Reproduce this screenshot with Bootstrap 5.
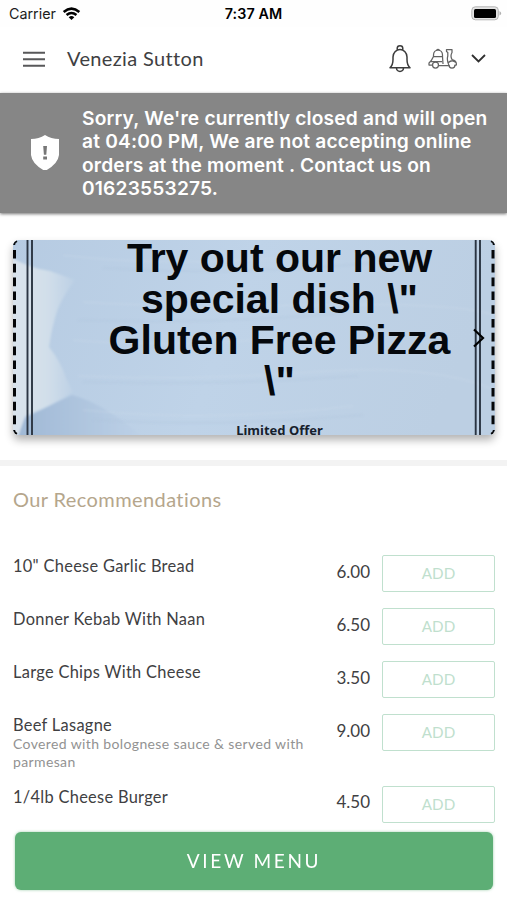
<!DOCTYPE html>
<html lang="en">
<head>
<meta charset="utf-8">
<meta name="viewport" content="width=device-width, initial-scale=1">
<title>Venezia Sutton</title>
<link href="https://cdn.jsdelivr.net/npm/bootstrap@5.3.0/dist/css/bootstrap.min.css" rel="stylesheet">
<style>
html,body{height:900px;overflow:hidden}
body{font-family:Lato,"Liberation Sans",sans-serif;color:#404042;background:#fff}
svg{display:block}
.statusbar{height:27px;font:400 14.3px/26px Inter,sans-serif;color:#1c1c1c;background:#fefefe}
.statusbar>div{width:33.333%}
.carrier{letter-spacing:0;padding-left:1px}
.wifi{margin-left:6px}
.clock{font-weight:600;letter-spacing:.1px;color:#000}
.topbar{height:66px;padding:0 21px 3px 23px}
.brand{font-size:20px;letter-spacing:.35px;margin-left:22px;line-height:26px;margin-top:-2px}
.scooter{margin:0 13px 0 17px}
.notice{height:120px;background:#868686;color:#fff;padding:1px 0 0 31px;box-shadow:0 1px 3px rgba(0,0,0,.55);font:600 19.2px/23.4px Inter,sans-serif;letter-spacing:.17px}
.notice p{margin-left:23px;white-space:nowrap}
.promo{height:195px;margin:27px 12px 0 13px;border-radius:6px;box-shadow:0 5px 9px rgba(0,0,0,.3);background:#bdd0e5}
.promo-copy{padding-left:51px}
.promo h2{font:700 41px/41.2px "Liberation Sans",sans-serif;color:#05080c;margin-top:-2.5px}
.promo small{font:700 13px/16px "Noto Sans",sans-serif;color:#17202b;margin-top:20px}
.next{right:10px;top:88px}
.divider{height:6px;background:#f3f3f3;margin-top:25px}
.heading{font-size:20px;line-height:26px;color:#b5a68c;letter-spacing:.4px;margin:20px 13px 0;font-weight:400}
.menu-list{padding:43px 12px 0 13px}
.item{height:53px}
.item.tall{height:71.5px}
.dish{font-size:16.4px;line-height:20px;letter-spacing:.3px;padding-top:1px}
.desc{font-size:14px;line-height:17.6px;color:#929292;letter-spacing:.37px;width:305px}
.price{font-size:17px;line-height:20px;margin:6.5px 12px 0 0}
.btn-add{width:113px;height:37px;border:1.5px solid #c0e0ce;border-radius:2px;color:#c0dfce;font-size:15.2px;line-height:20px;padding:0 0 1px;background:#fff}
.view{height:58px;left:15px;right:14px;bottom:10px;border-radius:6px;background:#5dae75;color:#fff;font-size:19px;letter-spacing:2.65px;padding:0;box-shadow:0 0 3px rgba(93,174,117,.6)}
</style>
</head>
<body>
<header>
<div class="statusbar d-flex align-items-center justify-content-between">
<div class="d-flex align-items-center ps-2"><span class="carrier">Carrier</span>
<svg class="wifi" width="19" height="14" viewBox="0 0 20 15" fill="none" stroke="#000" stroke-width="2.7"><path d="M1.6 5.4Q10-1.8 18.4 5.4M4.7 8.6Q10 4.2 15.3 8.6"/><path d="M10 14L7 10.9Q10 8.6 13 10.9Z" fill="#000" stroke="none"/></svg></div>
<div class="clock text-center">7:37 AM</div>
<div class="d-flex justify-content-end pe-1"><svg width="32" height="15" viewBox="0 0 32 15"><rect x=".8" y=".8" width="26.5" height="13" rx="3.5" fill="#e4e4e4" stroke="#b5b5b5"/><rect x="3" y="3" width="22" height="9" rx="1.5" fill="#000"/><path d="M28.5 5Q32 7.3 28.5 9.6Z" fill="#b0b0b0"/></svg></div>
</div>
<nav class="topbar d-flex align-items-center">
<svg width="22" height="16" viewBox="0 0 22 16" stroke="#58585a" stroke-width="2"><path d="M0 1.7H22M0 8.2H22M0 14.8H22"/></svg>
<span class="brand me-auto">Venezia Sutton</span>
<svg width="22" height="28" viewBox="0 0 22 28" fill="none" stroke="#3c3c3c" stroke-width="1.5" stroke-linejoin="round"><path d="M8.2 5V3.5a2.8 2.7 0 0 1 5.6 0V5M1 22.8Q4 20 4 14.5V12a7 7.4 0 0 1 14 0v2.5q0 5.5 3 8.3ZM7.5 23.2a3.5 3.2 0 0 0 7 0"/></svg>
<svg class="scooter" width="30" height="22" viewBox="0 0 30 22" fill="none" stroke="#626262" stroke-width="1.25" stroke-linejoin="round"><path d="M5.5 8.5V7a4.5 5 0 0 1 9 0V8.5ZM8.5 2Q10 .8 11.5 2M5.5 8.5Q3.5 13 1 15V17H4.5M14.5 8.5L15 16M2.5 13.5H14M10.5 17.5H21Q18.5 12 19.8 8V4.5L18.5 3.5V1.5H24V4.5Q22 8 24 11.5Q29 12.5 28.3 17H26.5M20.5 14.5Q24 11 28 14.5"/><path d="M4.5 17a3 3 0 1 0 6 0a3 3 0 0 0-6 0M21 17a3 3 0 1 0 6 0"/></svg>
<svg width="15" height="9" viewBox="0 0 15 9" fill="none" stroke="#303030" stroke-width="1.8"><path d="M1 1L7.5 7.5L14 1"/></svg>
</nav>
</header>
<section class="notice d-flex align-items-center">
<svg class="mb-1" width="28" height="36" viewBox="0 0 28 36"><path d="M14 1Q20 4.8 28 5V21Q27 30 14 37Q1 30 0 21V5Q8 4.8 14 1Z" fill="#fff"/><path d="M12.2 12h3.8l-.7 8.7h-2.4ZM12.2 22.5h3.8v3h-3.8Z" fill="#777"/></svg>
<p class="mb-0">Sorry, We're currently closed and will open<br>at 04:00 PM, We are not accepting online<br>orders at the moment . Contact us on<br>01623553275.</p>
</section>
<main>
<section class="promo position-relative">
<svg class="position-absolute top-0 start-0 rounded-2" width="482" height="195" viewBox="0 0 482 195">
<defs><linearGradient id="sky" x2="1" y2=".15"><stop stop-color="#b6cbe2"/><stop offset=".5" stop-color="#bfd3e8"/><stop offset="1" stop-color="#bccfe3"/></linearGradient><linearGradient id="cloth" x2="1"><stop stop-color="#dae3ec"/><stop offset=".55" stop-color="#d2dfea"/><stop offset="1" stop-color="#bcd0e5"/></linearGradient><linearGradient id="shade" x2="1"><stop stop-color="#9fb8d5"/><stop offset="1" stop-color="#bdd1e7"/></linearGradient><filter id="soft"><feGaussianBlur stdDeviation="1"/></filter></defs>
<path fill="url(#sky)" d="M0 0H482V195H0Z"/>
<g filter="url(#soft)"><path fill="url(#shade)" d="M3 197L12 178L59 155Q90 163 130 197Z"/>
<path fill="url(#cloth)" d="M-2 17Q15 28 37 31L62 40Q46 61 42 78Q38 92 36 107Q48 122 53 138L60 152Q40 165 12 176L5 197H-2Z"/></g>
<g filter="url(#soft)" fill="none" stroke="#d2dfec" opacity=".4"><path d="M70 62Q160 68 300 65T482 75M65 136Q180 141 300 132T482 150M60 100Q140 108 270 98M70 170Q200 183 340 166M50 15Q150 28 290 16"/></g>
<g filter="url(#soft)" fill="none" stroke="#aec4dc" opacity=".5"><path d="M70 142Q210 146 345 136M65 80Q200 85 330 73M90 28Q220 37 360 23M80 180Q210 188 350 175"/></g>
<path d="M14.5 0V195M19 0V195M462.7 0V195M467 0V195" stroke="#2a3442" stroke-width="1.9"/>
<path d="M1.5 10V188M480 10V188" stroke="#050608" stroke-width="3" stroke-dasharray="8.6 5.2"/><path d="M1 5Q1 2 4 1M1 190Q1 193 4 194M481 5Q481 2 478 1M481 190Q481 193 478 194" stroke="#050608" stroke-width="2.2" fill="none"/>
</svg>
<div class="promo-copy position-relative text-center h-100 d-flex flex-column">
<h2 class="mb-0">Try out our new<br>special dish \"<br>Gluten Free Pizza<br>\"</h2>
<small class="d-block">Limited Offer</small>
</div>
<svg class="next position-absolute" width="12" height="20" viewBox="0 0 12 20" fill="none" stroke="#000" stroke-width="2.2"><path d="M1 1.5L10 10L1 18.5"/></svg>
</section>
<div class="divider"></div>
<h1 class="heading">Our Recommendations</h1>
<section class="menu-list">
<div class="item d-flex align-items-start"><div class="dish me-auto">10" Cheese Garlic Bread</div><div class="price">6.00</div><button class="btn btn-add">ADD</button></div>
<div class="item d-flex align-items-start"><div class="dish me-auto">Donner Kebab With Naan</div><div class="price">6.50</div><button class="btn btn-add">ADD</button></div>
<div class="item d-flex align-items-start"><div class="dish me-auto">Large Chips With Cheese</div><div class="price">3.50</div><button class="btn btn-add">ADD</button></div>
<div class="item tall d-flex align-items-start"><div class="me-auto"><div class="dish">Beef Lasagne</div><div class="desc">Covered with bolognese sauce &amp; served with parmesan</div></div><div class="price">9.00</div><button class="btn btn-add">ADD</button></div>
<div class="item d-flex align-items-start"><div class="dish me-auto">1/4lb Cheese Burger</div><div class="price">4.50</div><button class="btn btn-add">ADD</button></div>
</section>
</main>
<button class="btn view position-fixed">VIEW MENU</button>
<script src="https://cdn.jsdelivr.net/npm/bootstrap@5.3.0/dist/js/bootstrap.bundle.min.js"></script>
</body>
</html>
